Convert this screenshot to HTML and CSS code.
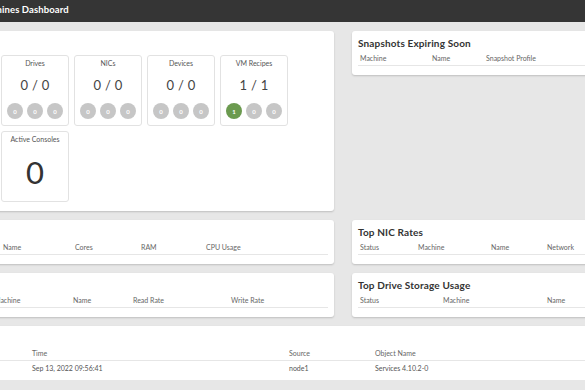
FILE: index.html
```html
<!DOCTYPE html>
<html>
  <head>
    <meta http-equiv="Content-Type" content="text/html;charset=UTF-8">
    <title>Machines Dashboard</title>
    <link rel="stylesheet" href="styles.css">
  </head>
  <body>
    <div class="page">
      <div class="topbar">
        <span class="topbar-title">Machines Dashboard</span>
      </div>
      <div class="main">
        <!-- summary counters -->
        <div class="panel summary">
          <div class="cards">
            <div class="card">
              <div class="card-title">Drives</div>
              <div class="card-value">0 / 0</div>
              <div class="dots">
                <span class="dot">0</span><span class="dot">0</span><span class="dot">0</span>
              </div>
            </div>
            <div class="card">
              <div class="card-title">NICs</div>
              <div class="card-value">0 / 0</div>
              <div class="dots">
                <span class="dot">0</span><span class="dot">0</span><span class="dot">0</span>
              </div>
            </div>
            <div class="card">
              <div class="card-title">Devices</div>
              <div class="card-value">0 / 0</div>
              <div class="dots">
                <span class="dot">0</span><span class="dot">0</span><span class="dot">0</span>
              </div>
            </div>
            <div class="card">
              <div class="card-title">VM Recipes</div>
              <div class="card-value">1 / 1</div>
              <div class="dots">
                <span class="dot ok">1</span><span class="dot">0</span><span class="dot">0</span>
              </div>
            </div>
            <div class="card">
              <div class="card-title">Active Consoles</div>
              <div class="card-big">0</div>
            </div>
          </div>
        </div>

        <div class="panel small">
          <div class="panel-title">Snapshots Expiring Soon</div>
          <div class="thead snap-cols">
            <span>Machine</span><span>Name</span><span>Snapshot Profile</span>
          </div>
        </div>

        <div class="panel small untitled">
          <div class="thead cpu-cols">
            <span></span><span>Name</span><span>Cores</span><span>RAM</span><span>CPU Usage</span>
          </div>
        </div>

        <div class="panel small">
          <div class="panel-title">Top NIC Rates</div>
          <div class="thead nic-cols">
            <span>Status</span><span>Machine</span><span>Name</span><span>Network</span>
          </div>
        </div>

        <div class="panel small untitled">
          <div class="thead rate-cols">
            <span></span><span>Machine</span><span>Name</span><span>Read Rate</span><span>Write Rate</span>
          </div>
        </div>

        <div class="panel small">
          <div class="panel-title">Top Drive Storage Usage</div>
          <div class="thead storage-cols">
            <span>Status</span><span>Machine</span><span>Name</span>
          </div>
        </div>

        <!-- events -->
        <div class="panel events untitled">
          <div class="thead event-cols">
            <span></span><span>Time</span><span>Source</span><span>Object Name</span>
          </div>
          <div class="trow event-cols">
            <span></span><span>Sep 13, 2022 09:56:41</span><span>node1</span><span>Services 4.10.2-0</span>
          </div>
        </div>
      </div>
    </div>
  </body>
</html>
```

FILE: styles.css
```css
html, body {
  margin: 0;
  padding: 0;
  overflow: hidden;
  background: #e7e7e7;
  font-family: Lato, "Liberation Sans", sans-serif;
}
.page {
  width: 720px;
  margin-left: -80px;
}
.topbar {
  height: 22px;
  background: #353535;
  padding-left: 58px;
  display: flex;
  align-items: center;
}
.topbar-title {
  color: #fff;
  font-weight: bold;
  font-size: 9.5px;
  letter-spacing: 0.1px;
  margin-top: -3px;
}
.main {
  display: grid;
  grid-template-columns: 414px 270px;
  column-gap: 18px;
  row-gap: 9px;
  padding-top: 9px;
  align-items: start;
}
.panel {
  background: #fff;
  border-radius: 3px;
  box-shadow: 0 1px 2px rgba(0, 0, 0, 0.18);
  box-sizing: border-box;
}

/* summary */
.summary {
  height: 180px;
  padding: 24px 0 0 81px;
}
.cards {
  display: grid;
  grid-template-columns: repeat(4, 68px);
  grid-auto-rows: 71px;
  gap: 5px;
}
.card {
  border: 1px solid #e2e2e2;
  border-radius: 3px;
  display: flex;
  flex-direction: column;
  align-items: center;
  padding-top: 2px;
  box-sizing: border-box;
}
.card-title {
  font-size: 7px;
  line-height: 10px;
  color: #555;
}
.card-value {
  font-size: 13px;
  line-height: 16px;
  color: #444;
  letter-spacing: 0.3px;
  margin-top: 9px;
}
.card-big {
  font-size: 31px;
  line-height: 34px;
  color: #333;
  margin-top: 11px;
}
.dots {
  display: flex;
  gap: 4px;
  margin-top: 10px;
}
.dot {
  width: 16px;
  height: 16px;
  border-radius: 50%;
  background: #c6c6c6;
  color: #fff;
  font-size: 6px;
  font-weight: bold;
  display: flex;
  align-items: center;
  justify-content: center;
}
.dot.ok {
  background: #6b9a4f;
}

/* small tables */
.small {
  height: 44px;
  padding: 6px 6px 0 6px;
}
.untitled {
  padding-top: 22px;
}
.panel-title {
  font-size: 10px;
  font-weight: bold;
  line-height: 12px;
  color: #333;
  letter-spacing: 0.15px;
}
.thead, .trow {
  display: grid;
  font-size: 7px;
  line-height: 10px;
  color: #666;
}
.panel-title + .thead {
  margin-top: 4px;
}
.thead {
  padding-bottom: 2px;
  border-bottom: 1px solid #e6e6e6;
}
.thead span, .trow span {
  padding-left: 2px;
  white-space: nowrap;
}
.trow {
  padding-top: 2px;
  color: #555;
}
.snap-cols {
  grid-template-columns: 72px 54px 1fr;
}
.nic-cols {
  grid-template-columns: 58px 73px 56px 1fr;
}
.storage-cols {
  grid-template-columns: 83px 104px 1fr;
}
.cpu-cols {
  grid-template-columns: 75px 72px 66px 65px 1fr;
}
.rate-cols {
  grid-template-columns: 66px 79px 60px 98px 1fr;
}
.events {
  grid-column: span 2;
  height: 54px;
  padding: 22px 6px 0 6px;
}
.event-cols {
  grid-template-columns: 104px 257px 86px 1fr;
}
```
